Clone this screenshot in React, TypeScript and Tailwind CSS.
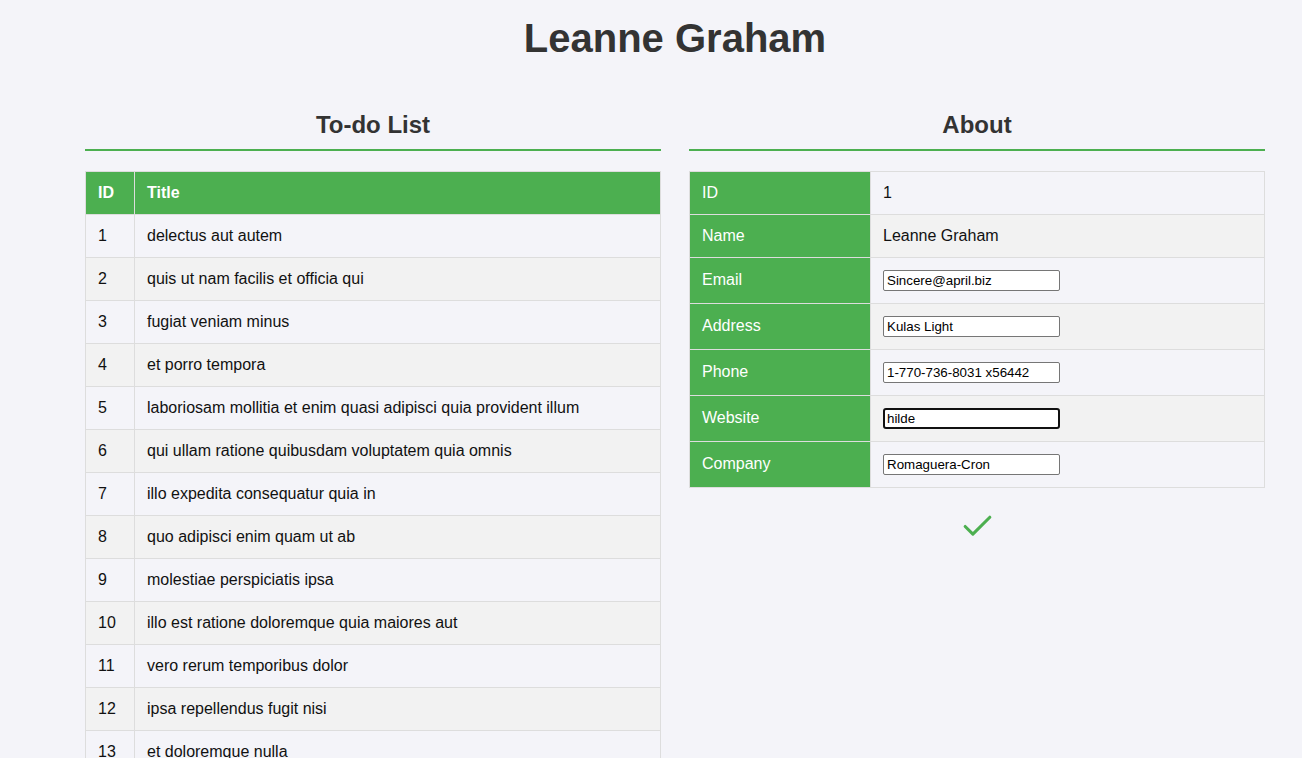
import React from "react";
import { Check } from "lucide-react";

const todos: string[] = [
  "delectus aut autem",
  "quis ut nam facilis et officia qui",
  "fugiat veniam minus",
  "et porro tempora",
  "laboriosam mollitia et enim quasi adipisci quia provident illum",
  "qui ullam ratione quibusdam voluptatem quia omnis",
  "illo expedita consequatur quia in",
  "quo adipisci enim quam ut ab",
  "molestiae perspiciatis ipsa",
  "illo est ratione doloremque quia maiores aut",
  "vero rerum temporibus dolor",
  "ipsa repellendus fugit nisi",
  "et doloremque nulla",
];

interface Field {
  label: string;
  value: string;
  editable: boolean;
  focused?: boolean;
}

const fields: Field[] = [
  { label: "ID", value: "1", editable: false },
  { label: "Name", value: "Leanne Graham", editable: false },
  { label: "Email", value: "Sincere@april.biz", editable: true },
  { label: "Address", value: "Kulas Light", editable: true },
  { label: "Phone", value: "1-770-736-8031 x56442", editable: true },
  { label: "Website", value: "hilde", editable: true, focused: true },
  { label: "Company", value: "Romaguera-Cron", editable: true },
];

const SectionTitle: React.FC<{ title: string }> = ({ title }) => (
  <h2 className="text-center text-[24px] leading-[28px] font-bold text-[#333] pb-[10px] border-b-2 border-[#4caf50] mb-[20px]">
    {title}
  </h2>
);

const App: React.FC = () => {
  return (
    <div className="h-screen overflow-hidden bg-[#f4f4f9] text-[#111] font-['Liberation_Sans',Arial,sans-serif] pl-[85px] pr-[37px]">
      <h1 className="text-center text-[40px] leading-[46px] font-bold text-[#333] pt-[15px]">
        Leanne Graham
      </h1>

      <div className="grid grid-cols-2 gap-[28px] mt-[50px]">
        {/* todos */}
        <div>
          <SectionTitle title="To-do List" />
          <table className="w-full border-collapse text-[16px] leading-[18px]">
            <thead>
              <tr className="bg-[#4caf50] text-white">
                <th className="w-[49px] border border-[#ddd] px-3 py-3 text-left font-bold">ID</th>
                <th className="border border-[#ddd] px-3 py-3 text-left font-bold">Title</th>
              </tr>
            </thead>
            <tbody>
              {todos.map((t, i) => (
                <tr key={i} className="even:bg-[#f2f2f2]">
                  <td className="border border-[#ddd] px-3 py-3">{i + 1}</td>
                  <td className="border border-[#ddd] px-3 py-3">{t}</td>
                </tr>
              ))}
            </tbody>
          </table>
        </div>

        {/* about */}
        <div>
          <SectionTitle title="About" />
          <table className="w-full border-collapse text-[16px] leading-[18px]">
            <tbody>
              {fields.map((f) => (
                <tr key={f.label} className="even:bg-[#f2f2f2]">
                  <td
                    className={
                      f.editable
                        ? "w-[181px] border border-[#ddd] bg-[#4caf50] text-white px-3 pt-[11px] pb-[13px]"
                        : "w-[181px] border border-[#ddd] bg-[#4caf50] text-white px-3 py-3"
                    }
                  >
                    {f.label}
                  </td>
                  <td className="border border-[#ddd] px-3 py-3">
                    {f.editable ? (
                      <input
                        type="text"
                        defaultValue={f.value}
                        autoFocus={f.focused}
                        className={
                          f.focused
                            ? "block w-[177px] h-[21px] bg-white border-2 border-[#111] rounded-[3px] px-[2px] text-[13.33px] text-black outline-none caret-black"
                            : "block w-[177px] h-[21px] bg-white border border-[#767676] rounded-[2px] px-[3px] text-[13.33px] text-black outline-none"
                        }
                      />
                    ) : (
                      f.value
                    )}
                  </td>
                </tr>
              ))}
            </tbody>
          </table>
          <div className="flex justify-center mt-[20px]">
            <Check size={37} strokeWidth={2} color="#4caf50" />
          </div>
        </div>
      </div>
    </div>
  );
};

export default App;
